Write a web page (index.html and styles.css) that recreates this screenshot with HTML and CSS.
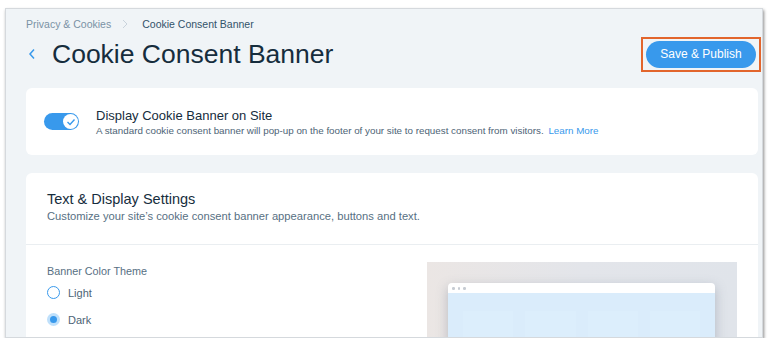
FILE: index.html
```html
<!DOCTYPE html>
<html lang="en">
<head>
    <meta charset="UTF-8">
    <meta name="viewport" content="width=device-width, initial-scale=1.0">
    <title>Cookie Consent Banner</title>
    <link rel="stylesheet" href="styles.css">
</head>
<body>
    <div class="frame">
        <div class="breadcrumb">
            <span class="crumb">Privacy &amp; Cookies</span>
            <svg class="crumb-sep" width="6" height="10" viewBox="0 0 6 10"><path d="M1 1l4 4-4 4" fill="none" stroke="#c9d3dc" stroke-width="1"/></svg>
            <span class="crumb current">Cookie Consent Banner</span>
        </div>

        <div class="title-row">
            <div class="title-left">
                <svg class="back" width="8" height="12" viewBox="0 0 8 12"><path d="M6 1.5L2 6l4 4.5" fill="none" stroke="#3899ec" stroke-width="1.5"/></svg>
                <h1>Cookie Consent Banner</h1>
            </div>
            <div class="highlight">
                <button class="publish">Save &amp; Publish</button>
            </div>
        </div>

        <div class="card toggle-card">
            <div class="toggle">
                <div class="knob">
                    <svg width="10" height="8" viewBox="0 0 10 8"><path d="M1.5 4l2.5 2.5 4.5-5" fill="none" stroke="#3899ec" stroke-width="1.4"/></svg>
                </div>
            </div>
            <div>
                <div class="toggle-title">Display Cookie Banner on Site</div>
                <div class="toggle-sub">A standard cookie consent banner will pop-up on the footer of your site to request consent from visitors. <a class="link">Learn More</a></div>
            </div>
        </div>

        <div class="card settings-card">
            <div class="settings-head">
                <h2>Text &amp; Display Settings</h2>
                <div class="settings-sub">Customize your site’s cookie consent banner appearance, buttons and text.</div>
            </div>
            <div class="settings-body">
                <div class="theme">
                    <div class="label">Banner Color Theme</div>
                    <label class="radio"><span class="dot"></span>Light</label>
                    <label class="radio"><span class="dot checked"></span>Dark</label>
                </div>
                <div class="preview">
                    <div class="browser">
                        <div class="browser-bar"><i></i><i></i><i></i></div>
                        <div class="browser-body">
                            <span></span><span></span><span></span><span></span>
                        </div>
                    </div>
                </div>
            </div>
        </div>
    </div>
</body>
</html>
```

FILE: styles.css
```css
body {
    margin: 0;
    background-color: white;
    font-family: "Liberation Sans", Arial, sans-serif;
    color: #162d3d;
}
.frame {
    box-sizing: border-box;
    width: 758px;
    height: 330px;
    margin: 8px 0 0 5px;
    padding: 0 4px 0 20px;
    background-color: #f0f4f7;
    border: 1px solid #d5d9dd;
    box-shadow: 1px 2px 3px rgba(0,0,0,0.45);
    overflow: hidden;
}
.breadcrumb {
    display: flex;
    align-items: center;
    height: 12px;
    margin-top: 9px;
    font-size: 10.5px;
}
.crumb {
    color: #7a92a5;
}
.crumb.current {
    color: #32536a;
}
.crumb-sep {
    margin: 0 14px 0 11px;
}
.title-row {
    display: flex;
    justify-content: space-between;
    align-items: center;
    margin-top: 4px;
    height: 40px;
}
.title-left {
    display: flex;
    align-items: center;
}
.back {
    margin: 0 16px 0 2px;
}
h1 {
    margin: 0;
    font-size: 26.5px;
    font-weight: normal;
    color: #162d3d;
}
.highlight {
    margin-right: -3px;
    padding: 2px 3px;
    border: 2px solid #e2652c;
}
.publish {
    display: block;
    width: 110px;
    height: 27px;
    border: none;
    border-radius: 14px;
    background-color: #3899ec;
    color: white;
    font-family: inherit;
    font-size: 12px;
}
.card {
    background-color: white;
    border-radius: 6px;
}
.toggle-card {
    display: flex;
    align-items: center;
    height: 67px;
    margin-top: 14px;
    padding-left: 18px;
}
.toggle {
    display: flex;
    justify-content: flex-end;
    align-items: center;
    width: 35px;
    height: 17px;
    margin-right: 17px;
    padding: 0 1px;
    box-sizing: border-box;
    border-radius: 9px;
    background-color: #3899ec;
}
.knob {
    display: flex;
    justify-content: center;
    align-items: center;
    width: 15px;
    height: 15px;
    border-radius: 50%;
    background-color: white;
}
.toggle-title {
    font-size: 13px;
    color: #162d3d;
}
.toggle-sub {
    margin-top: 2px;
    font-size: 9.8px;
    color: #4d6476;
}
.link {
    margin-left: 2px;
    color: #3899ec;
}
.settings-card {
    margin-top: 18px;
    height: 200px;
}
.settings-head {
    padding: 18px 21px 0;
    height: 53px;
    border-bottom: 1px solid #eaeef1;
}
h2 {
    margin: 0;
    font-size: 14.5px;
    font-weight: normal;
    color: #162d3d;
}
.settings-sub {
    margin-top: 3px;
    font-size: 11.2px;
    color: #577083;
}
.settings-body {
    display: flex;
    justify-content: space-between;
    padding: 17px 21px 0;
}
.label {
    margin-top: 3px;
    font-size: 10.8px;
    color: #577083;
}
.radio {
    display: flex;
    align-items: center;
    margin-top: 9px;
    font-size: 11px;
    color: #4d6476;
}
.radio + .radio {
    margin-top: 14px;
}
.dot {
    box-sizing: border-box;
    width: 13px;
    height: 13px;
    margin-right: 8px;
    border: 1px solid #3899ec;
    border-radius: 50%;
    background-color: white;
}
.dot.checked {
    border: 3px solid #bfe0fb;
    background-color: #3899ec;
}
.preview {
    width: 310px;
    height: 120px;
    background: linear-gradient(90deg, #ebe6e4, #e3e5ea 50%, #e0e4ea);
    padding: 21px 0 0 21px;
    box-sizing: border-box;
}
.browser {
    width: 267px;
    height: 120px;
    border-radius: 4px 4px 0 0;
    background-color: white;
    box-shadow: 0 4px 12px rgba(90,100,120,0.35);
    overflow: hidden;
}
.browser-bar {
    display: flex;
    gap: 3px;
    height: 10px;
    padding: 4px 0 0 4px;
    box-sizing: border-box;
}
.browser-bar i {
    width: 2.5px;
    height: 2.5px;
    border-radius: 50%;
    background-color: #c7ccd3;
}
.browser-body {
    display: flex;
    gap: 12px;
    height: 110px;
    padding: 18px 15px 0;
    box-sizing: border-box;
    background-color: #daecfb;
}
.browser-body span {
    flex: 1;
    background-color: #dceefc;
}
```
